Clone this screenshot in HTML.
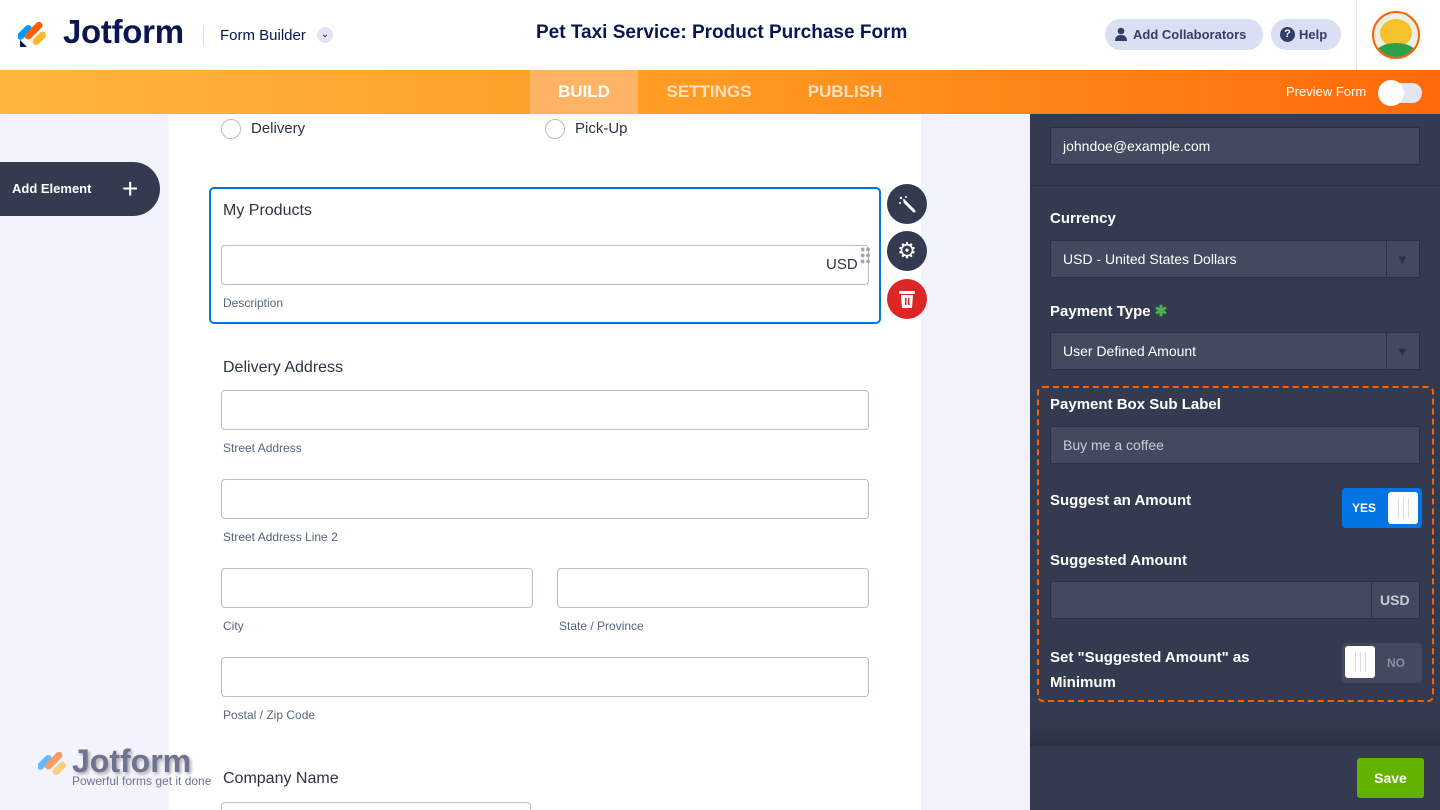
<!DOCTYPE html>
<html style="width:1440px;height:810px;overflow:hidden"><head><meta charset="utf-8"><style>
*{box-sizing:border-box;margin:0;padding:0}
body{width:1440px;height:810px;overflow:hidden;position:relative;font-family:"Liberation Sans",sans-serif;background:#f3f3fe}
.abs{position:absolute}
.top{left:0;top:0;width:1440px;height:70px;background:#fff}
.bar{left:0;top:70px;width:1440px;height:44px;background:linear-gradient(90deg,#ffb53e,#ff9a22 50%,#ff6a0a)}
.tab{top:70px;height:44px;line-height:44px;color:#ffe0c0;font-weight:bold;font-size:17px;text-align:center}
.form{left:169px;top:114px;width:752px;height:696px;background:#fff}
.lbl{color:#2c3345;font-size:16px}
.inp{border:1px solid #b8bdc9;border-radius:4px;height:40px;background:#fff}
.sub{color:#57647e;font-size:12px}
.panel{left:1030px;top:114px;width:410px;height:696px;background:#343a4f}
.pl{color:#fff;font-weight:bold;font-size:15px;left:1050px}
.pi{left:1050px;width:370px;height:38px;background:#434a60;border:1px solid #2b3042;color:#fff;font-size:14px;padding-left:12px;line-height:36px}
.circ{width:40px;height:40px;border-radius:50%;background:#343a4f;left:887px}
.knob{background:#fff;border-radius:3px;width:30px;height:32px}
.knob:after{content:"";position:absolute;left:10px;top:6px;width:9px;height:20px;border-left:1px solid #ddd;border-right:1px solid #ddd;background:linear-gradient(90deg,transparent 45%,#ddd 45%,#ddd 55%,transparent 55%)}
</style></head><body>
<div class="abs top"></div>
<svg class="abs" style="left:18px;top:16px" width="32" height="32" viewBox="0 0 32 32">
<rect x="3" y="7" width="7" height="18" rx="3.5" transform="rotate(45 6 16)" fill="#0099ff"/>
<rect x="12" y="4" width="7" height="22" rx="3.5" transform="rotate(45 16 15)" fill="#ff6100"/>
<rect x="18" y="14" width="7" height="16" rx="3.5" transform="rotate(45 21 22)" fill="#ffb629"/>
<path d="M2 24 L2 31 L9 31 Z" fill="#0a1551"/></svg>
<div class="abs" style="left:63px;top:13px;font-size:33px;font-weight:bold;color:#0a1551;letter-spacing:-0.3px">Jotform</div>
<div class="abs" style="left:203px;top:25px;width:1px;height:20px;background:#ddd"></div>
<div class="abs" style="left:220px;top:27px;font-size:15px;color:#0a1551">Form Builder</div>
<div class="abs" style="left:317px;top:27px;width:16px;height:16px;border-radius:50%;background:#e3e5f5;color:#0a1551;font-size:10px;text-align:center;line-height:16px">⌄</div>
<div class="abs" style="left:536px;top:22px;font-size:19px;font-weight:bold;color:#0a1551">Pet Taxi Service: Product Purchase Form</div>
<div class="abs" style="left:1105px;top:19px;width:158px;height:31px;border-radius:16px;background:#dadff3;color:#343c6a;font-weight:bold;font-size:13px;line-height:31px;padding-left:28px">Add Collaborators</div>
<svg class="abs" style="left:1114px;top:27px" width="14" height="14" viewBox="0 0 14 14"><circle cx="7" cy="4" r="3.3" fill="#343c6a"/><path d="M1 14 Q1 8 7 8 Q13 8 13 14Z" fill="#343c6a"/></svg>
<div class="abs" style="left:1271px;top:19px;width:70px;height:31px;border-radius:16px;background:#dadff3;color:#343c6a;font-weight:bold;font-size:13px;line-height:31px;padding-left:28px">Help</div>
<div class="abs" style="left:1280px;top:27px;width:15px;height:15px;border-radius:50%;background:#343c6a;color:#fff;font-size:11px;text-align:center;line-height:15px;font-weight:bold">?</div>
<div class="abs" style="left:1356px;top:0;width:1px;height:70px;background:#e5e5e5"></div>
<div class="abs" style="left:1372px;top:11px;width:48px;height:48px;border-radius:50%;border:2px solid #ff6100;background:#e9f0e5;overflow:hidden">
<div class="abs" style="left:6px;top:6px;width:32px;height:28px;border-radius:50%;background:#f6c22b"></div>
<div class="abs" style="left:2px;top:30px;width:40px;height:20px;border-radius:50% 50% 0 0;background:#2e9f4a"></div></div>
<div class="abs bar"></div>
<div class="abs tab" style="left:530px;width:108px;background:#ffb364;color:#fff">BUILD</div>
<div class="abs tab" style="left:648px;width:122px">SETTINGS</div>
<div class="abs tab" style="left:790px;width:110px">PUBLISH</div>
<div class="abs" style="left:1286px;top:84px;color:#fff;font-size:13px">Preview Form</div>
<div class="abs" style="left:1378px;top:83px;width:44px;height:20px;border-radius:10px;background:#e3e5ef"></div>
<div class="abs" style="left:1378px;top:80px;width:26px;height:26px;border-radius:50%;background:#fff"></div>

<div class="abs" style="left:0;top:162px;width:160px;height:54px;background:#343a4f;border-radius:0 27px 27px 0;color:#fff;font-weight:bold;font-size:13px;line-height:54px;padding-left:12px">Add Element<span style="position:absolute;left:122px;top:0;font-size:28px;font-weight:normal">+</span></div>

<div class="abs form"></div>
<div class="abs" style="left:221px;top:119px;width:20px;height:20px;border-radius:50%;border:1px solid #b8bdc9"></div>
<div class="abs lbl" style="left:251px;top:120px;font-size:15px">Delivery</div>
<div class="abs" style="left:545px;top:119px;width:20px;height:20px;border-radius:50%;border:1px solid #b8bdc9"></div>
<div class="abs lbl" style="left:575px;top:120px;font-size:15px">Pick-Up</div>

<div class="abs" style="left:209px;top:187px;width:672px;height:137px;border:2px solid #0075e3;border-radius:5px"></div>
<div class="abs lbl" style="left:223px;top:202px">My Products</div>
<div class="abs inp" style="left:221px;top:245px;width:648px"></div>
<div class="abs" style="left:826px;top:256px;font-size:15px;color:#2c3345">USD</div>
<div class="abs" style="left:860px;top:246px;color:#a0a6b5;font-size:9px;line-height:6px">●●<br>●●<br>●●</div>
<div class="abs sub" style="left:223px;top:296px">Description</div>
<div class="abs circ" style="top:184px"></div>
<svg class="abs" style="left:897px;top:194px" width="20" height="20" viewBox="0 0 20 20"><path d="M8 8 L17 17" stroke="#fff" stroke-width="3" stroke-linecap="round"/><g fill="#fff"><circle cx="4" cy="4" r="1.2"/><circle cx="9" cy="3" r="1"/><circle cx="3" cy="9" r="1"/><circle cx="7" cy="6" r="1"/></g></svg>
<div class="abs circ" style="top:231px"></div>
<div class="abs" style="left:887px;top:231px;width:40px;height:40px;text-align:center;line-height:40px;color:#fff;font-size:22px">⚙</div>
<div class="abs circ" style="top:279px;background:#dc2626"></div>
<svg class="abs" style="left:898px;top:289px" width="18" height="20" viewBox="0 0 18 20"><rect x="1" y="2" width="16" height="3" rx="1" fill="#fff"/><path d="M3 6 H15 L14 19 H4Z" fill="#fff"/><rect x="7" y="9" width="1.5" height="7" fill="#dc2626"/><rect x="10" y="9" width="1.5" height="7" fill="#dc2626"/></svg>

<div class="abs lbl" style="left:223px;top:359px">Delivery Address</div>
<div class="abs inp" style="left:221px;top:390px;width:648px"></div>
<div class="abs sub" style="left:223px;top:441px">Street Address</div>
<div class="abs inp" style="left:221px;top:479px;width:648px"></div>
<div class="abs sub" style="left:223px;top:530px">Street Address Line 2</div>
<div class="abs inp" style="left:221px;top:568px;width:312px"></div>
<div class="abs inp" style="left:557px;top:568px;width:312px"></div>
<div class="abs sub" style="left:223px;top:619px">City</div>
<div class="abs sub" style="left:559px;top:619px">State / Province</div>
<div class="abs inp" style="left:221px;top:657px;width:648px"></div>
<div class="abs sub" style="left:223px;top:708px">Postal / Zip Code</div>
<div class="abs lbl" style="left:223px;top:770px">Company Name</div>
<div class="abs" style="left:221px;top:802px;width:310px;height:8px;border:1px solid #b8bdc9;border-bottom:none;border-radius:4px 4px 0 0"></div>

<div class="abs" style="left:38px;top:746px;opacity:.6">
<svg width="32" height="32" viewBox="0 0 32 32"><rect x="3" y="7" width="7" height="18" rx="3.5" transform="rotate(45 6 16)" fill="#0099ff"/><rect x="12" y="4" width="7" height="22" rx="3.5" transform="rotate(45 16 15)" fill="#ff6100"/><rect x="18" y="14" width="7" height="16" rx="3.5" transform="rotate(45 21 22)" fill="#ffb629"/></svg></div>
<div class="abs" style="left:72px;top:743px;font-size:32px;font-weight:bold;color:#6f7290;text-shadow:2px 2px 3px #aaa">Jotform</div>
<div class="abs" style="left:72px;top:774px;font-size:12px;color:#6f7290">Powerful forms get it done</div>

<div class="abs panel"></div>
<div class="abs pi" style="top:127px">johndoe@example.com</div>
<div class="abs" style="left:1030px;top:185px;width:410px;height:1px;background:#2b3042"></div>
<div class="abs pl" style="top:210px">Currency</div>
<div class="abs pi" style="top:240px">USD - United States Dollars</div>
<div class="abs" style="left:1386px;top:241px;width:1px;height:36px;background:#2b3042"></div>
<div class="abs" style="left:1396px;top:252px;color:#2b3042;font-size:13px">▼</div>
<div class="abs pl" style="top:302px">Payment Type <span style="color:#4caf50">✱</span></div>
<div class="abs pi" style="top:332px">User Defined Amount</div>
<div class="abs" style="left:1386px;top:333px;width:1px;height:36px;background:#2b3042"></div>
<div class="abs" style="left:1396px;top:344px;color:#2b3042;font-size:13px">▼</div>
<div class="abs" style="left:1037px;top:386px;width:397px;height:316px;border:2px dashed #ff6100;border-radius:6px"></div>
<div class="abs pl" style="top:396px">Payment Box Sub Label</div>
<div class="abs pi" style="top:426px;color:#c9ccd6">Buy me a coffee</div>
<div class="abs pl" style="top:492px">Suggest an Amount</div>
<div class="abs" style="left:1342px;top:488px;width:80px;height:40px;border-radius:4px;background:#0075e3;color:#fff;font-weight:bold;font-size:12px;line-height:40px;padding-left:10px">YES</div>
<div class="abs knob" style="left:1388px;top:492px"></div>
<div class="abs pl" style="top:552px">Suggested Amount</div>
<div class="abs pi" style="top:581px"></div>
<div class="abs" style="left:1371px;top:582px;width:1px;height:36px;background:#2b3042"></div>
<div class="abs" style="left:1380px;top:592px;color:#c9ccd6;font-size:14px;font-weight:bold">USD</div>
<div class="abs pl" style="top:645px;line-height:25px">Set "Suggested Amount" as<br>Minimum</div>
<div class="abs" style="left:1342px;top:643px;width:80px;height:40px;border-radius:4px;background:#434a60;color:#8a90a3;font-weight:bold;font-size:12px;line-height:40px;padding-left:45px">NO</div>
<div class="abs knob" style="left:1345px;top:646px"></div>
<div class="abs" style="left:1030px;top:725px;width:410px;height:21px;background:linear-gradient(#343a4f,#2b3042)"></div>
<div class="abs" style="left:1357px;top:758px;width:67px;height:40px;border-radius:3px;background:#64b200;color:#fff;font-weight:bold;font-size:14px;text-align:center;line-height:40px">Save</div>
</body></html>
